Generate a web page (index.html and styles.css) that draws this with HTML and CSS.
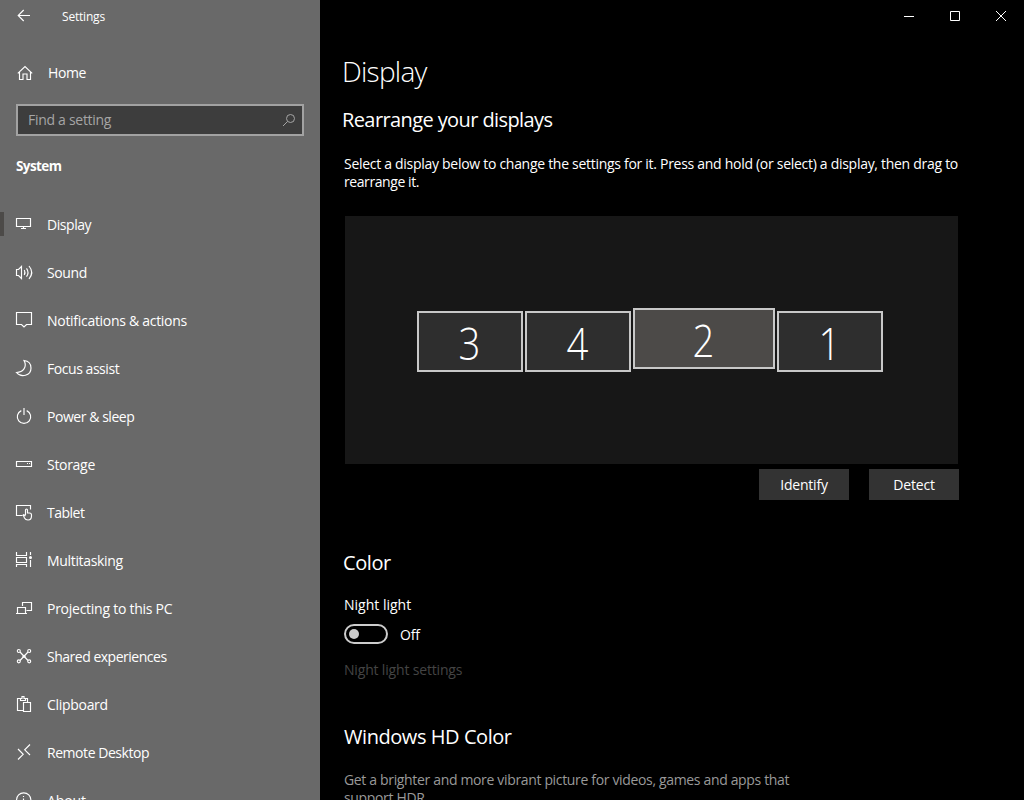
FILE: index.html
```html
<!DOCTYPE html>
<html lang="en">
<head>
<meta charset="utf-8">
<title>Settings</title>
<link rel="stylesheet" href="styles.css">
</head>
<body>
<div class="window">
  <aside class="sidebar">
    <header class="titlebar">
      <svg class="icon" viewBox="0 0 24 24"><path d="M18 11.500H6.500M11.700 6l-5.500 5.500 5.500 5.500"/></svg>
      <span class="app-name t-settings">Settings</span>
    </header>
    <a class="home">
      <svg class="icon" viewBox="0 0 24 24"><path d="M5.800 12.300l7.200-6.800 7.200 6.800M7.500 11v7.500h3.500v-5.500h4v5.500h3.500V11"/></svg>
      <span class="label t-home">Home</span>
    </a>
    <div class="search">
      <span class="placeholder">Find a setting</span>
      <svg class="search-icon" viewBox="0 0 16 16"><circle cx="9.500" cy="6.500" r="4"/><path d="M6.500 9.500L2 14"/></svg>
    </div>
    <h2 class="group"><span class="t-system">System</span></h2>
    <nav class="nav">
      <a class="item active"><svg class="icon" viewBox="0 0 24 24"><path d="M4.500 5.500h14v8h-14zM9 15.500h5M11.500 14v1"/></svg><span class="label t-display">Display</span></a>
      <a class="item"><svg class="icon" viewBox="0 0 24 24"><path d="M4.500 8.500h2l3-3v12l-3-3h-2zM12.300 9q1.300 2.500 0 5M14.500 7.300q3 4.200 0 8.400M17 5q5.500 6.500 0 13"/></svg><span class="label t-sound">Sound</span></a>
      <a class="item"><svg class="icon" viewBox="0 0 24 24"><path d="M4.500 3.500h15v12h-5l-2.500 2.500-2.500-2.500h-5z"/></svg><span class="label t-notif">Notifications &amp; actions</span></a>
      <a class="item"><svg class="icon" viewBox="0 0 24 24"><path d="M12 3.500C16.500 4 19 7 19 11c0 8-10 10-14.500 4.500C11 15.500 15.500 10 12 3.500z"/></svg><span class="label t-focus">Focus assist</span></a>
      <a class="item"><svg class="icon" viewBox="0 0 24 24"><path d="M9.300 5.600a6.700 6.700 0 1 0 5.400 0M12 3v7"/></svg><span class="label t-power">Power &amp; sleep</span></a>
      <a class="item"><svg class="icon" viewBox="0 0 24 24"><path d="M4.500 8.500h15v5h-15zM15 10.500h1M17 10.500h1"/></svg><span class="label t-storage">Storage</span></a>
      <a class="item"><svg class="icon" viewBox="0 0 24 24"><path d="M10.500 14.500h-6v-10h14v4M13.500 14V9q0-1 1-1t1 1v3h2q2 0 2 2v1q0 4-3.500 4-2.500 0-3.500-2l-1.300-3q.3-1 2.300 1"/></svg><span class="label t-tablet">Tablet</span></a>
      <a class="item"><svg class="icon" viewBox="0 0 24 24"><path d="M4.500 3v3.500h10V3M4.500 8.500h10v5h-10zM4.500 18v-2.500h10V18M18.500 3v3M18.500 11v7"/><circle class="solid" cx="18.500" cy="8.500" r="1.500"/></svg><span class="label t-multi">Multitasking</span></a>
      <a class="item"><svg class="icon" viewBox="0 0 24 24"><path d="M10.500 9V5.500h9v8h-5M5.500 16V10.500h8V16M4 16.500h11"/></svg><span class="label t-proj">Projecting to this PC</span></a>
      <a class="item"><svg class="icon" viewBox="0 0 24 24"><path d="M8 7l8 8.500M16 7l-8 8.500"/><circle cx="6.800" cy="6" r="1.500"/><circle cx="17.200" cy="6" r="1.500"/><circle cx="6.800" cy="16.300" r="1.500"/><circle cx="17.200" cy="16.300" r="1.500"/><circle class="solid" cx="12" cy="11.200" r="1.500"/></svg><span class="label t-shared">Shared experiences</span></a>
      <a class="item"><svg class="icon" viewBox="0 0 24 24"><path d="M11 17.500H5.500v-12h3M13.500 5.500h2V9M8.500 7.500v-2h1.500v-2h2v2h1.500v2zM11.500 9.500h7v9h-7z"/></svg><span class="label t-clip">Clipboard</span></a>
      <a class="item"><svg class="icon" viewBox="0 0 24 24"><path d="M6 8l5.200 5.300L6 18.500M18 3.500l-5.300 5.300L18 14"/></svg><span class="label t-remote">Remote Desktop</span></a>
      <a class="item"><svg class="icon" viewBox="0 0 24 24"><circle cx="11.700" cy="11" r="7.200"/><path d="M11.500 9.500V15M11.500 7v1"/></svg><span class="label t-about">About</span></a>
    </nav>
  </aside>
  <main class="content">
    <div class="controls">
      <svg class="control" viewBox="0 0 46 32"><path d="M18 16.500h10"/></svg>
      <svg class="control" viewBox="0 0 46 32"><path d="M18.500 11.500h9v9h-9z"/></svg>
      <svg class="control" viewBox="0 0 46 32"><path d="M18 11l10 10M28 11L18 21"/></svg>
    </div>
    <h1 class="title"><span class="t-title">Display</span></h1>
    <h2 class="heading"><span class="t-rearrange">Rearrange your displays</span></h2>
    <p class="text intro"><span class="t-intro">Select a display below to change the settings for it. Press and hold (or select) a display, then drag to</span><br><span class="t-intro2">rearrange it.</span></p>
    <section class="arranger">
      <div class="monitor"><span class="digit">3</span></div>
      <div class="monitor"><span class="digit">4</span></div>
      <div class="monitor selected"><span class="digit">2</span></div>
      <div class="monitor"><span class="digit">1</span></div>
    </section>
    <div class="actions"><button class="button"><span class="t-identify">Identify</span></button><button class="button"><span class="t-detect">Detect</span></button></div>
    <h2 class="heading color"><span class="t-color">Color</span></h2>
    <p class="text night"><span class="t-night">Night light</span></p>
    <div class="switch-row"><span class="switch"><span class="knob"></span></span><span class="text t-off">Off</span></div>
    <p class="text disabled"><span class="t-nls">Night light settings</span></p>
    <h2 class="heading hd"><span class="t-hd">Windows HD Color</span></h2>
    <p class="text muted"><span class="t-get">Get a brighter and more vibrant picture for videos, games and apps that</span><br><span class="t-support">support HDR.</span></p>
  </main>
</div>
</body>
</html>
```
FILE: styles.css
```css
* { box-sizing: border-box; }
body { margin: 0; background: #000; color: #fff; font: 14px/18px "Open Sans", "Noto Sans", sans-serif; overflow: hidden; }
h1, h2, p { margin: 0; font-weight: 400; }
.window { display: flex; width: 1024px; height: 800px; overflow: hidden; }
.sidebar { width: 320px; flex: none; background: #696969; }
.icon, .control, .search-icon { display: block; flex: none; fill: none; stroke: #fff; stroke-width: 1; }
.icon { width: 24px; height: 24px; stroke-width: 1.15; }
.solid { fill: #fff; stroke: none; }
.titlebar { display: flex; align-items: center; height: 32px; padding-left: 12px; }
.app-name { margin-left: 26px; padding-top: 2px; font-size: 12px; }
.home { display: flex; align-items: center; height: 48px; margin-top: 17px; padding-left: 12px; }
.home .label { margin-left: 12px; }
.search { display: flex; align-items: center; justify-content: space-between; width: 288px; height: 32px; margin: 7px 0 0 16px; padding: 0 5px 1px 10px; border: 2px solid #a2a2a2; background: #3d3d3d; color: #a5a5a5; }
.search-icon { width: 16px; height: 16px; stroke: #a5a5a5; }
.group { margin: 21px 0 0 16px; font-size: 13.5px; font-weight: 700; }
.nav { display: flex; flex-direction: column; margin-top: 26px; }
.item { display: flex; align-items: center; height: 48px; padding-left: 12px; }
.item .label { margin-left: 11px; }
.active { background: linear-gradient(#4c4a48, #4c4a48) 0 11px / 4px 24px no-repeat; }
.label, .app-name, .placeholder, .text { white-space: nowrap; }
.content { flex: 1; padding-left: 24px; }
.controls { display: flex; justify-content: flex-end; height: 32px; }
.control { width: 46px; height: 32px; }
.title { margin: 20px 0 0 -2px; font-size: 28px; line-height: 38px; font-weight: 350; }
.heading { margin-left: -1px; font-size: 20px; line-height: 28px; }
.title + .heading { margin-top: 16px; margin-left: -2px; }
.intro { margin-top: 21px; }
.arranger { display: flex; align-items: flex-start; gap: 2px; width: 613px; height: 248px; margin: 25px 0 0 1px; padding: 94.500px 0 0 71.500px; background: #171717; }
.monitor { width: 106px; height: 61px; border: 2px solid #c8c8c8; background: #2e2e2e; font-size: 43.500px; line-height: 62px; font-weight: 300; text-align: center; }
.digit { display: inline-block; transform: scaleX(.88); }
.selected { width: 142px; margin-top: -2.500px; background: #4c4a48; }
.actions { display: flex; gap: 20px; margin: 5px 0 0 415px; }
.button { width: 90px; height: 31px; padding: 0; border: 0; background: #333; color: #fff; font: inherit; }
.color { margin-top: 49px; }
.night { margin-top: 19px; }
.switch-row { display: flex; align-items: center; gap: 12px; margin-top: 10px; height: 20px; }
.switch { display: flex; align-items: center; width: 44px; height: 20px; padding-left: 3px; border: 2px solid #ccc; border-radius: 10px; }
.knob { width: 10px; height: 10px; border-radius: 50%; background: #ccc; }
.disabled { margin-top: 17px; color: #444; }
.hd { margin-top: 44px; margin-left: 0; }
.muted { margin-top: 20px; color: #999; }

/* tracking */
.t-settings, .t-identify, .t-detect { letter-spacing: -.2px; }
.t-home, .t-sound { letter-spacing: -.4px; }
.placeholder, .t-notif { letter-spacing: -.290px; }
.t-system { letter-spacing: -.6px; }
.t-display, .t-focus, .t-power, .t-remote { letter-spacing: -.45px; }
.t-storage, .t-clip { letter-spacing: -.3px; }
.t-tablet { letter-spacing: -.5px; }
.t-multi { letter-spacing: -.33px; }
.t-proj { letter-spacing: -.26px; }
.t-shared { letter-spacing: -.49px; }
.t-about { letter-spacing: -.1px; }
.t-title { letter-spacing: -.75px; }
.t-rearrange { letter-spacing: -.6px; }
.t-intro { letter-spacing: -.288px; }
.t-intro2, .t-color { letter-spacing: -.42px; }
.t-off { padding-top: 2px; letter-spacing: -.2px; }
.t-nls { letter-spacing: -.17px; }
.t-hd { letter-spacing: -.44px; }
.t-get, .t-support { letter-spacing: -.34px; }
```
